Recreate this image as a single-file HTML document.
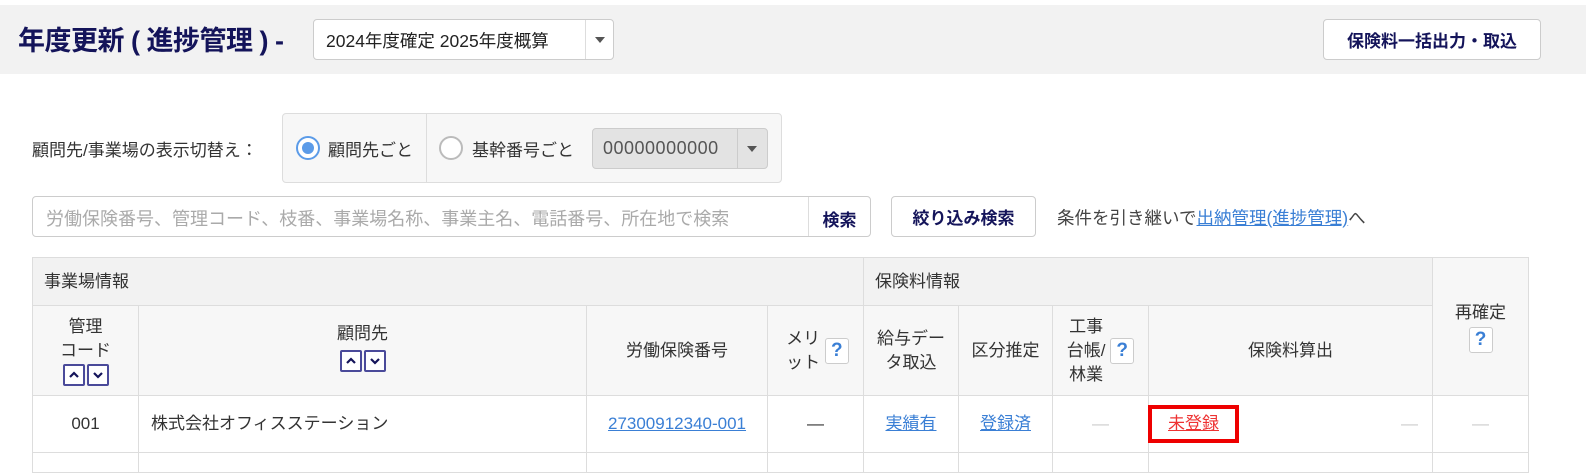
<!DOCTYPE html>
<html><head><meta charset="utf-8"><style>
*{box-sizing:border-box;margin:0;padding:0}
body{width:1586px;height:463px;background:#fff;font-family:"Liberation Sans","Noto Sans CJK JP",sans-serif;color:#333;position:relative;overflow:hidden;font-size:17px}
.abs{position:absolute;white-space:nowrap}
.band{left:0;top:5px;width:1586px;height:69px;background:#f2f2f2}
.title{left:18px;top:19px;font-size:27px;font-weight:bold;color:#14145a;letter-spacing:-0.5px}
.box{border:1px solid #ccc;border-radius:4px;background:#fff}
.caret{width:0;height:0;border-left:5px solid transparent;border-right:5px solid transparent;border-top:6px solid #555;position:absolute}
.btn{border:1px solid #ccc;border-radius:4px;background:#fff;font-weight:bold;color:#14145a;display:flex;align-items:center;justify-content:center;font-size:17px}
table{position:absolute;left:32px;top:257px;border-collapse:collapse;table-layout:fixed}
td,th{border:1px solid #ddd;font-weight:normal;font-size:17px;color:#333;text-align:center;vertical-align:middle;line-height:24px}
.h1 th{background:#f2f2f2;height:48px;text-align:left;padding-left:11px}
.h2 th{background:#f7f7f7;height:90px}
.q{display:inline-block;width:24px;height:26px;border:1px solid #ccc;border-radius:3px;background:#fff;color:#3a7fd5;font-weight:bold;line-height:24px;font-size:19px;vertical-align:middle}
.sb{display:inline-block;width:22px;height:22px;border:2px solid #4a4a9a;border-radius:2px;background:#fff;margin:0 1px;position:relative;vertical-align:middle}
.sb svg{position:absolute;left:3px;top:3px}
a{color:#3a7fd5;text-decoration:underline}
.dash{color:#ccc}
</style></head><body>
<div class="abs band"></div>
<div class="abs title">年度更新 ( 進捗管理 ) -</div>
<div class="abs box" style="left:313px;top:19px;width:301px;height:41px">
 <div class="abs" style="left:12px;top:8px;font-size:17.5px;color:#222">2024年度確定 2025年度概算</div>
 <div class="abs" style="left:271px;top:0;width:1px;height:39px;background:#ddd"></div>
 <div class="caret" style="left:281px;top:17px"></div>
</div>
<div class="abs btn" style="left:1323px;top:19px;width:218px;height:41px">保険料一括出力・取込</div>

<div class="abs" style="left:32px;top:136px;font-size:17px">顧問先/事業場の表示切替え：</div>
<div class="abs" style="left:282px;top:113px;width:500px;height:70px;border:1px solid #ddd;border-radius:4px;background:#f7f7f7">
 <div class="abs" style="left:143px;top:0;width:1px;height:68px;background:#ddd"></div>
 <div class="abs" style="left:13px;top:22px;width:24px;height:24px;border-radius:50%;border:2px solid #5b9be8;background:#fff"><div class="abs" style="left:4px;top:4px;width:12px;height:12px;border-radius:50%;background:#5b9be8"></div></div>
 <div class="abs" style="left:45px;top:22px;font-size:17px">顧問先ごと</div>
 <div class="abs" style="left:156px;top:22px;width:24px;height:24px;border-radius:50%;border:2px solid #bbb;background:#fff"></div>
 <div class="abs" style="left:189px;top:22px;font-size:17px">基幹番号ごと</div>
 <div class="abs" style="left:309px;top:14px;width:176px;height:41px;border:1px solid #ccc;border-radius:4px;background:#e3e3e3">
  <div class="abs" style="left:10px;top:9px;font-size:18px;color:#555;letter-spacing:0.5px">00000000000</div>
  <div class="abs" style="left:144px;top:0;width:1px;height:39px;background:#ccc"></div>
  <div class="caret" style="left:154px;top:17px"></div>
 </div>
</div>

<div class="abs box" style="left:32px;top:196px;width:839px;height:41px">
 <div class="abs" style="left:13px;top:8px;font-size:18px;color:#aaa">労働保険番号、管理コード、枝番、事業場名称、事業主名、電話番号、所在地で検索</div>
 <div class="abs" style="left:775px;top:0;width:1px;height:39px;background:#ddd"></div>
 <div class="abs" style="left:775px;top:9px;width:63px;text-align:center;font-weight:bold;color:#14145a">検索</div>
</div>
<div class="abs btn" style="left:891px;top:196px;width:145px;height:41px">絞り込み検索</div>
<div class="abs" style="left:1057px;top:205px;font-size:17.5px;color:#444">条件を引き継いで<a>出納管理(進捗管理)</a>へ</div>

<table>
<colgroup><col style="width:106px"><col style="width:448px"><col style="width:181px"><col style="width:96px"><col style="width:95px"><col style="width:94px"><col style="width:96px"><col style="width:284px"><col style="width:96px"></colgroup>
<tr class="h1"><th colspan="4">事業場情報</th><th colspan="4">保険料情報</th><th rowspan="2" style="background:#f7f7f7;text-align:center;padding:0;vertical-align:top;padding-top:43px">再確定<br><span class="q" style="margin-top:2px">?</span></th></tr>
<tr class="h2">
<th>管理<br>コード<br><span class="sb"><svg width="12" height="12" viewBox="0 0 12 12"><path d="M2 8L6 4L10 8" stroke="#14145a" stroke-width="2.2" fill="none"/></svg></span><span class="sb"><svg width="12" height="12" viewBox="0 0 12 12"><path d="M2 4L6 8L10 4" stroke="#14145a" stroke-width="2.2" fill="none"/></svg></span></th>
<th style="padding-bottom:8px">顧問先<br><span class="sb" style="margin-top:4px"><svg width="12" height="12" viewBox="0 0 12 12"><path d="M2 8L6 4L10 8" stroke="#14145a" stroke-width="2.2" fill="none"/></svg></span><span class="sb" style="margin-top:4px"><svg width="12" height="12" viewBox="0 0 12 12"><path d="M2 4L6 8L10 4" stroke="#14145a" stroke-width="2.2" fill="none"/></svg></span></th>
<th>労働保険番号</th>
<th style="padding-left:4px"><span style="display:inline-block;vertical-align:middle;text-align:left">メリ<br>ット</span> <span class="q">?</span></th>
<th>給与デー<br>タ取込</th>
<th>区分推定</th>
<th><span style="display:inline-block;vertical-align:middle">工事<br>台帳/<br>林業</span> <span class="q">?</span></th>
<th>保険料算出</th>
</tr>
<tr style="height:57px">
<td>001</td>
<td style="text-align:left;padding-left:12px">株式会社オフィスステーション</td>
<td><a>27300912340-001</a></td>
<td>―</td>
<td><a>実績有</a></td>
<td><a>登録済</a></td>
<td class="dash">―</td>
<td style="position:relative;text-align:left"><span style="display:inline-block;border:4px solid #e00;padding:3px 16px;margin-left:-1px"><a style="color:#e33">未登録</a></span><span class="dash" style="position:absolute;right:14px;top:16px">―</span></td>
<td class="dash">―</td>
</tr>
<tr style="height:20px"><td></td><td></td><td></td><td></td><td></td><td></td><td></td><td></td><td></td></tr>
</table>
</body></html>
